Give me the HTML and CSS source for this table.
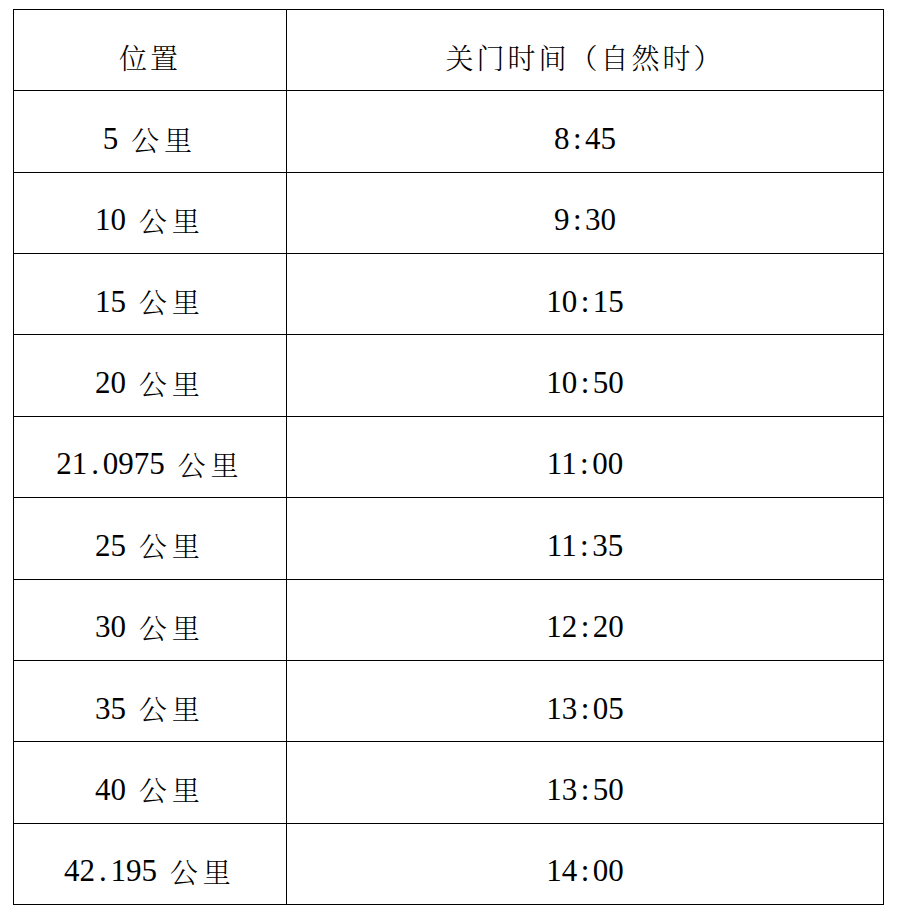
FILE: index.html
```html
<!DOCTYPE html>
<html lang="zh-CN">
<head>
<meta charset="utf-8">
<title>关门时间</title>
<link rel="stylesheet" href="styles.css">
</head>
<body>
<div class="table">
  <div class="cell"><span class="cn">位置</span></div>
  <div class="cell"><span class="cn">关门时间（自然时）</span></div>

  <div class="cell"><span class="n">5 </span><span class="cn">公里</span></div>
  <div class="cell"><span class="n">8<span class="p">:</span>45</span></div>

  <div class="cell"><span class="n">10 </span><span class="cn">公里</span></div>
  <div class="cell"><span class="n">9<span class="p">:</span>30</span></div>

  <div class="cell"><span class="n">15 </span><span class="cn">公里</span></div>
  <div class="cell"><span class="n">10<span class="p">:</span>15</span></div>

  <div class="cell"><span class="n">20 </span><span class="cn">公里</span></div>
  <div class="cell"><span class="n">10<span class="p">:</span>50</span></div>

  <div class="cell"><span class="n">21<span class="p">.</span>0975 </span><span class="cn">公里</span></div>
  <div class="cell"><span class="n">11<span class="p">:</span>00</span></div>

  <div class="cell"><span class="n">25 </span><span class="cn">公里</span></div>
  <div class="cell"><span class="n">11<span class="p">:</span>35</span></div>

  <div class="cell"><span class="n">30 </span><span class="cn">公里</span></div>
  <div class="cell"><span class="n">12<span class="p">:</span>20</span></div>

  <div class="cell"><span class="n">35 </span><span class="cn">公里</span></div>
  <div class="cell"><span class="n">13<span class="p">:</span>05</span></div>

  <div class="cell"><span class="n">40 </span><span class="cn">公里</span></div>
  <div class="cell"><span class="n">13<span class="p">:</span>50</span></div>

  <div class="cell"><span class="n">42<span class="p">.</span>195 </span><span class="cn">公里</span></div>
  <div class="cell"><span class="n">14<span class="p">:</span>00</span></div>
</div>
</body>
</html>
```

FILE: styles.css
```css
html, body {
  margin: 0;
  padding: 0;
  background: #ffffff;
}

body {
  padding: 9px 0 0 13px;
  color: #000000;
}

.table {
  display: grid;
  grid-template-columns: 273px 597px;
  grid-auto-rows: 81.36px;
  width: 870px;
  border-top: 1px solid #000000;
  border-left: 1px solid #000000;
}

.cell {
  box-sizing: border-box;
  display: flex;
  align-items: center;
  justify-content: center;
  padding-top: 14px;
  border-right: 1px solid #000000;
  border-bottom: 1px solid #000000;
  white-space: pre;
}

.cn {
  font-family: "Noto Serif CJK SC", "Noto Sans CJK SC", sans-serif;
  font-size: 28px;
  font-weight: 300;
  letter-spacing: 3px;
  line-height: 1;
}

.n + .cn {
  margin-left: 5px;
  letter-spacing: 5px;
}

.n {
  font-family: "Liberation Serif", Tinos, "Times New Roman", serif;
  font-size: 31px;
  font-weight: 400;
  letter-spacing: 0;
  line-height: 1;
}

.p {
  display: inline-block;
  width: 0.5em;
  text-align: center;
}
```
